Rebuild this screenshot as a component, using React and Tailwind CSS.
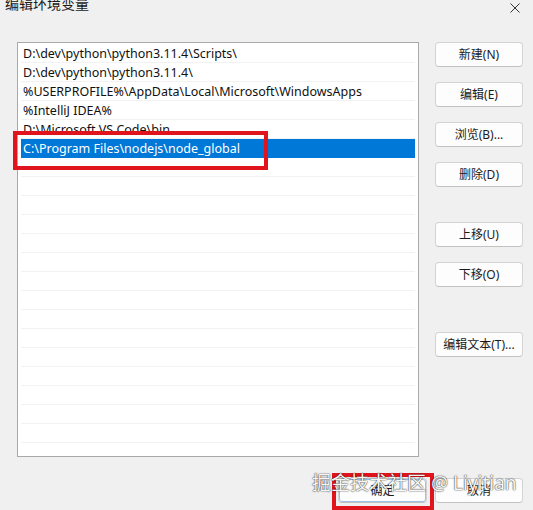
import React from 'react';

const paths = [
  'D:\\dev\\python\\python3.11.4\\Scripts\\',
  'D:\\dev\\python\\python3.11.4\\',
  '%USERPROFILE%\\AppData\\Local\\Microsoft\\WindowsApps',
  '%IntelliJ IDEA%',
  'D:\\Microsoft VS Code\\bin',
  'C:\\Program Files\\nodejs\\node_global',
];

const SELECTED = 5;
const ROW_COUNT = 21;

const font = { fontFamily: '"Noto Sans", "Noto Sans CJK SC", sans-serif' };

const Button = ({ children, className = '' }) => (
  <button
    className={`h-[25px] w-[88px] rounded-[4px] border border-[#d3d3d3] border-b-[#c2c2c2] bg-[#fdfdfd] text-[12px] leading-none text-[#1b1b1b] ${className}`}
  >
    {children}
  </button>
);

export default function App() {
  const rows = Array.from({ length: ROW_COUNT }, (_, i) => paths[i] ?? '');

  return (
    <div className="relative h-[510px] w-[533px] overflow-hidden bg-[#f0f0f0]" style={font}>
      {/* title bar, its top is cut off */}
      <div className="-mt-[9px] flex h-[24px] items-center justify-between pl-[5px] pr-[13px]">
        <span className="text-[14px] text-[#1a1a1a]">编辑环境变量</span>
        <svg width="10" height="10" viewBox="0 0 10 10" className="mt-[9px]">
          <path d="M0.5 0.5 L9.5 9.5 M9.5 0.5 L0.5 9.5" stroke="#333" strokeWidth="1" />
        </svg>
      </div>

      <div className="mt-[27px] flex pl-[17px]">
        {/* path list */}
        <div className="h-[415px] w-[402px] border border-[#a9a9a9] bg-white pt-[1px]">
          {rows.map((text, i) => (
            <div
              key={i}
              className={`mx-[3px] flex h-[19px] items-center whitespace-nowrap px-[2px] pt-[2px] text-[12.5px] ${
                i === SELECTED
                  ? 'bg-[#0078d7] text-white'
                  : 'border-b border-[#f2f2f2] text-[#111]'
              }`}
            >
              {text}
            </div>
          ))}
        </div>

        {/* action buttons */}
        <div className="ml-[16px] flex flex-col">
          <Button>新建(N)</Button>
          <Button className="mt-[15px]">编辑(E)</Button>
          <Button className="mt-[15px]">浏览(B)...</Button>
          <Button className="mt-[15px]">删除(D)</Button>
          <Button className="mt-[35px]">上移(U)</Button>
          <Button className="mt-[15px]">下移(O)</Button>
          <Button className="mt-[45px]">编辑文本(T)...</Button>
        </div>
      </div>

      <div className="mt-[21px] flex justify-end gap-[8px] pr-[10px]">
        <Button className="w-[89px] border-[#4f8fd6] border-b-[#4f8fd6] outline outline-1 -outline-offset-2 outline-[#9cc2ea]">
          确定
        </Button>
        <Button>取消</Button>
      </div>

      {/* highlight boxes */}
      <div className="absolute left-[13px] top-[131px] h-[39px] w-[255px] border-[4px] border-[#e0141c]" />
      <div className="absolute left-[332px] top-[473px] h-[37px] w-[102px] border-[4px] border-[#e0141c]" />

      {/* watermark */}
      <div
        className="absolute left-[312px] top-[474px] whitespace-nowrap text-[19px] leading-none text-[#f6f6f6]"
        style={{ textShadow: '0 0 1.5px rgba(0,0,0,0.8), 0 0 1px rgba(0,0,0,0.6)' }}
      >
        掘金技术社区 @ Liyitian
      </div>
    </div>
  );
}
